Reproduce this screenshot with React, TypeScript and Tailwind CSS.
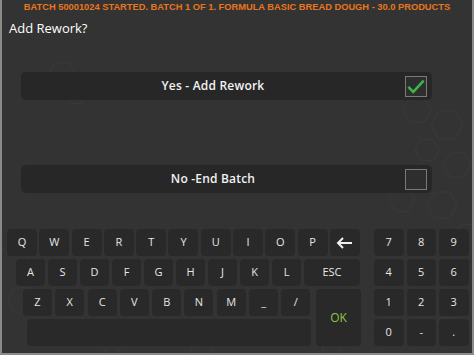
import React from "react";

const row1 = ["Q", "W", "E", "R", "T", "Y", "U", "I", "O", "P"];
const row2 = ["A", "S", "D", "F", "G", "H", "J", "K", "L"];
const row3 = ["Z", "X", "C", "V", "B", "N", "M", "_", "/"];
const numpad = ["7", "8", "9", "4", "5", "6", "1", "2", "3", "0", "-", "."];

// faint hex pattern in the background
const hexes: [number, number, number][] = [
  [60, 75, 14], [75, 95, 10], [40, 260, 16], [20, 300, 14], [70, 330, 12], [110, 345, 10],
  [415, 110, 14], [445, 125, 16], [425, 150, 12], [455, 165, 14], [400, 200, 13], [440, 205, 15],
  [465, 235, 12], [395, 240, 10], [445, 330, 14], [200, 350, 12], [330, 350, 10],
];

function hexPoints(cx: number, cy: number, r: number) {
  const pts = [];
  for (let i = 0; i < 6; i++) {
    const a = (Math.PI / 3) * i;
    pts.push(`${(cx + r * Math.cos(a)).toFixed(1)},${(cy + r * Math.sin(a)).toFixed(1)}`);
  }
  return pts.join(" ");
}

function Key({ label, className = "" }: { label?: React.ReactNode; className?: string }) {
  return (
    <div
      className={`h-[27px] rounded-[4px] bg-[#292929] flex items-center justify-center text-[11px] text-[#e6e6e6] ${className}`}
    >
      {label}
    </div>
  );
}

function Option({ label, checked }: { label: string; checked?: boolean }) {
  return (
    <div className="h-[28px] rounded-[5px] bg-[#272727] flex items-center pr-[5px]">
      <span className="flex-1 text-center text-[12px] font-semibold text-[#f2f2f2] tracking-[0.2px]">{label}</span>
      <div className="w-[22px] h-[21px] border-[1.5px] border-[#7a7a7a] bg-[#2e2e2e]">
        {checked && (
          <svg viewBox="0 0 22 21" className="w-full h-full">
            <polyline points="2.5,11 8,16.5 19.5,4" fill="none" stroke="#3cb54a" strokeWidth="2.8" />
          </svg>
        )}
      </div>
    </div>
  );
}

export default function App() {
  return (
    <div
      className="relative w-[474px] h-[355px] bg-[#333333] border-x-2 border-b-2 border-[#8a8a8a] overflow-hidden"
      style={{ fontFamily: '"Open Sans", "Noto Sans", sans-serif' }}
    >
      <svg className="absolute inset-0 pointer-events-none" width="474" height="355">
        {hexes.map(([x, y, r], i) => (
          <polygon key={i} points={hexPoints(x, y, r)} fill="none" stroke="#3a3a3a" strokeWidth="1" />
        ))}
      </svg>

      <div className="relative">
        <div
          className="h-[16px] flex items-center justify-center text-[9.3px] font-bold text-[#e8761e] leading-none"
          style={{ fontFamily: '"Liberation Sans", Arial, sans-serif' }}
        >
          BATCH 50001024 STARTED. BATCH 1 OF 1. FORMULA BASIC BREAD DOUGH - 30.0 PRODUCTS
        </div>
        <div className="pl-[7px] pt-[3px] text-[13px] leading-[19px] font-medium text-white">Add Rework?</div>

        <div className="pl-[19px] pr-[40px] mt-[34px]">
          <Option label="Yes - Add Rework" checked />
          <div className="h-[65px]" />
          <Option label="No -End Batch" />
        </div>

        {/* keyboard */}
        <div className="mt-[36px] flex">
          <div className="w-[359px] pl-[5px] flex flex-col gap-[3px]">
            <div className="flex gap-[2.3px]">
              {row1.map((k) => (
                <Key key={k} label={k} className="w-[30px]" />
              ))}
              <Key
                className="w-[30px]"
                label={
                  <svg width="17" height="12" viewBox="0 0 17 12">
                    <path d="M16 6H2M7 1L2 6l5 5" fill="none" stroke="#f0f0f0" strokeWidth="2" />
                  </svg>
                }
              />
            </div>
            <div className="flex gap-[3px] pl-[9px]">
              {row2.map((k) => (
                <Key key={k} label={k} className="w-[29px]" />
              ))}
              <Key label="ESC" className="w-[56px] text-[#d9822b]" />
            </div>
            <div className="flex gap-[5px]">
              <div className="flex flex-col gap-[3px] pl-[16px]">
                <div className="flex gap-[3.3px]">
                  {row3.map((k) => (
                    <Key key={k} label={k} className="w-[29px]" />
                  ))}
                </div>
                <Key className="ml-[4px] w-[284px]" />
              </div>
              <div className="w-[45px] h-[57px] rounded-[4px] bg-[#292929] flex items-center justify-center text-[12px] text-[#8dc63f]">
                OK
              </div>
            </div>
          </div>
          <div className="ml-[13px] grid grid-cols-[29.5px_29.5px_29.5px] gap-x-[3px] gap-y-[3px]">
            {numpad.map((k) => (
              <Key key={k} label={k} />
            ))}
          </div>
        </div>
      </div>
    </div>
  );
}
